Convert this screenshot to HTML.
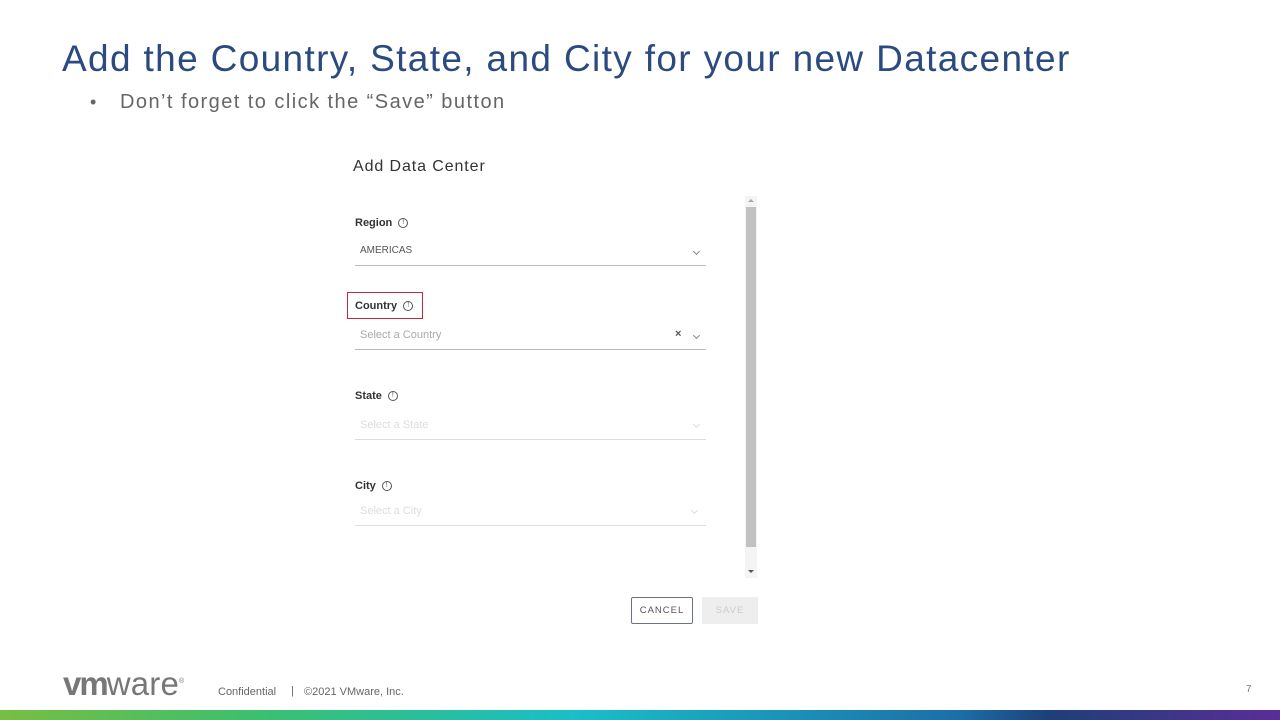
<!DOCTYPE html>
<html><head><meta charset="utf-8"><style>
*{margin:0;padding:0;box-sizing:border-box}
body{width:1280px;height:720px;background:#fff;position:relative;overflow:hidden;font-family:"Liberation Sans",sans-serif}
.a{position:absolute;white-space:nowrap}
.lbl{font-size:11px;font-weight:bold;color:#333}
.inf{display:inline-block;width:10px;height:10px;border:1px solid #555;border-radius:50%;font-size:7px;line-height:8px;text-align:center;vertical-align:middle;margin-left:6px;font-weight:normal;color:#555}
.line{position:absolute;left:355px;width:351px;height:1px;background:#bbb}
.chev{position:absolute;width:5px;height:5px;border-right:1px solid #888;border-bottom:1px solid #888;transform:rotate(45deg)}
</style></head><body>
<div class="a" style="left:62px;top:38px;font-size:37px;color:#2b4a80;letter-spacing:1.35px">Add the Country, State, and City for your new Datacenter</div>
<div class="a" style="left:90px;top:92px;font-size:18px;color:#666">•</div>
<div class="a" style="left:120px;top:91px;font-size:20px;color:#666;letter-spacing:1.45px">Don’t forget to click the “Save” button</div>

<div class="a" style="left:353px;top:158px;font-size:16px;color:#333;letter-spacing:0.9px">Add Data Center</div>

<div class="a lbl" style="left:355px;top:217px">Region<span class="inf">!</span></div>
<div class="a" style="left:360px;top:245px;font-size:10px;color:#555">AMERICAS</div>
<div class="chev" style="left:694px;top:249px"></div>
<div class="line" style="top:265px"></div>

<div class="a" style="left:347px;top:292px;width:76px;height:27px;border:1.5px solid #c4283c"></div>
<div class="a lbl" style="left:355px;top:300px">Country<span class="inf">!</span></div>
<div class="a" style="left:360px;top:329px;font-size:11px;color:#aaa">Select a Country</div>
<div class="a" style="left:675px;top:328px;font-size:11px;color:#555;font-weight:bold">×</div>
<div class="chev" style="left:694px;top:333px"></div>
<div class="line" style="top:349px"></div>

<div class="a lbl" style="left:355px;top:390px">State<span class="inf">!</span></div>
<div class="a" style="left:360px;top:419px;font-size:11px;color:#ddd">Select a State</div>
<div class="chev" style="left:694px;top:422px;border-color:#ddd"></div>
<div class="line" style="top:439px;background:#ddd"></div>

<div class="a lbl" style="left:355px;top:480px">City<span class="inf">!</span></div>
<div class="a" style="left:360px;top:505px;font-size:11px;color:#ddd">Select a City</div>
<div class="chev" style="left:692px;top:508px;border-color:#ddd"></div>
<div class="line" style="top:525px;background:#ddd"></div>

<div class="a" style="left:745px;top:196px;width:12px;height:382px;background:#f4f4f4"></div>
<div class="a" style="left:746px;top:207px;width:10px;height:340px;background:#c1c1c1"></div>
<div class="a" style="left:748px;top:199px;width:0;height:0;border-left:3px solid transparent;border-right:3px solid transparent;border-bottom:3px solid #aaa"></div>
<div class="a" style="left:748px;top:570px;width:0;height:0;border-left:3px solid transparent;border-right:3px solid transparent;border-top:3px solid #555"></div>

<div class="a" style="left:631px;top:597px;width:62px;height:27px;border:1px solid #6b7280;border-radius:2px;font-size:9.5px;letter-spacing:1px;color:#555;text-align:center;line-height:25px">CANCEL</div>
<div class="a" style="left:702px;top:597px;width:56px;height:27px;background:#eee;font-size:9.5px;letter-spacing:1px;color:#ccc;text-align:center;line-height:27px">SAVE</div>

<div class="a" style="left:63px;top:665px;font-size:33px;color:#777;letter-spacing:0.2px"><b style="letter-spacing:-2px">vm</b>ware<sup style="font-size:7px">®</sup></div>
<div class="a" style="left:218px;top:686px;font-size:11px;color:#666">Confidential</div>
<div class="a" style="left:291px;top:685px;font-size:11px;color:#666">|</div>
<div class="a" style="left:304px;top:686px;font-size:11px;color:#666">©2021 VMware, Inc.</div>
<div class="a" style="left:1246px;top:684px;font-size:10px;color:#777">7</div>
<div class="a" style="left:0;top:710px;width:1280px;height:10px;background:linear-gradient(90deg,#78be43 0%,#3cbf6e 20%,#1bbec8 45%,#1c6ea8 75%,#1e3f78 82%,#5b2d96 100%)"></div>
</body></html>
